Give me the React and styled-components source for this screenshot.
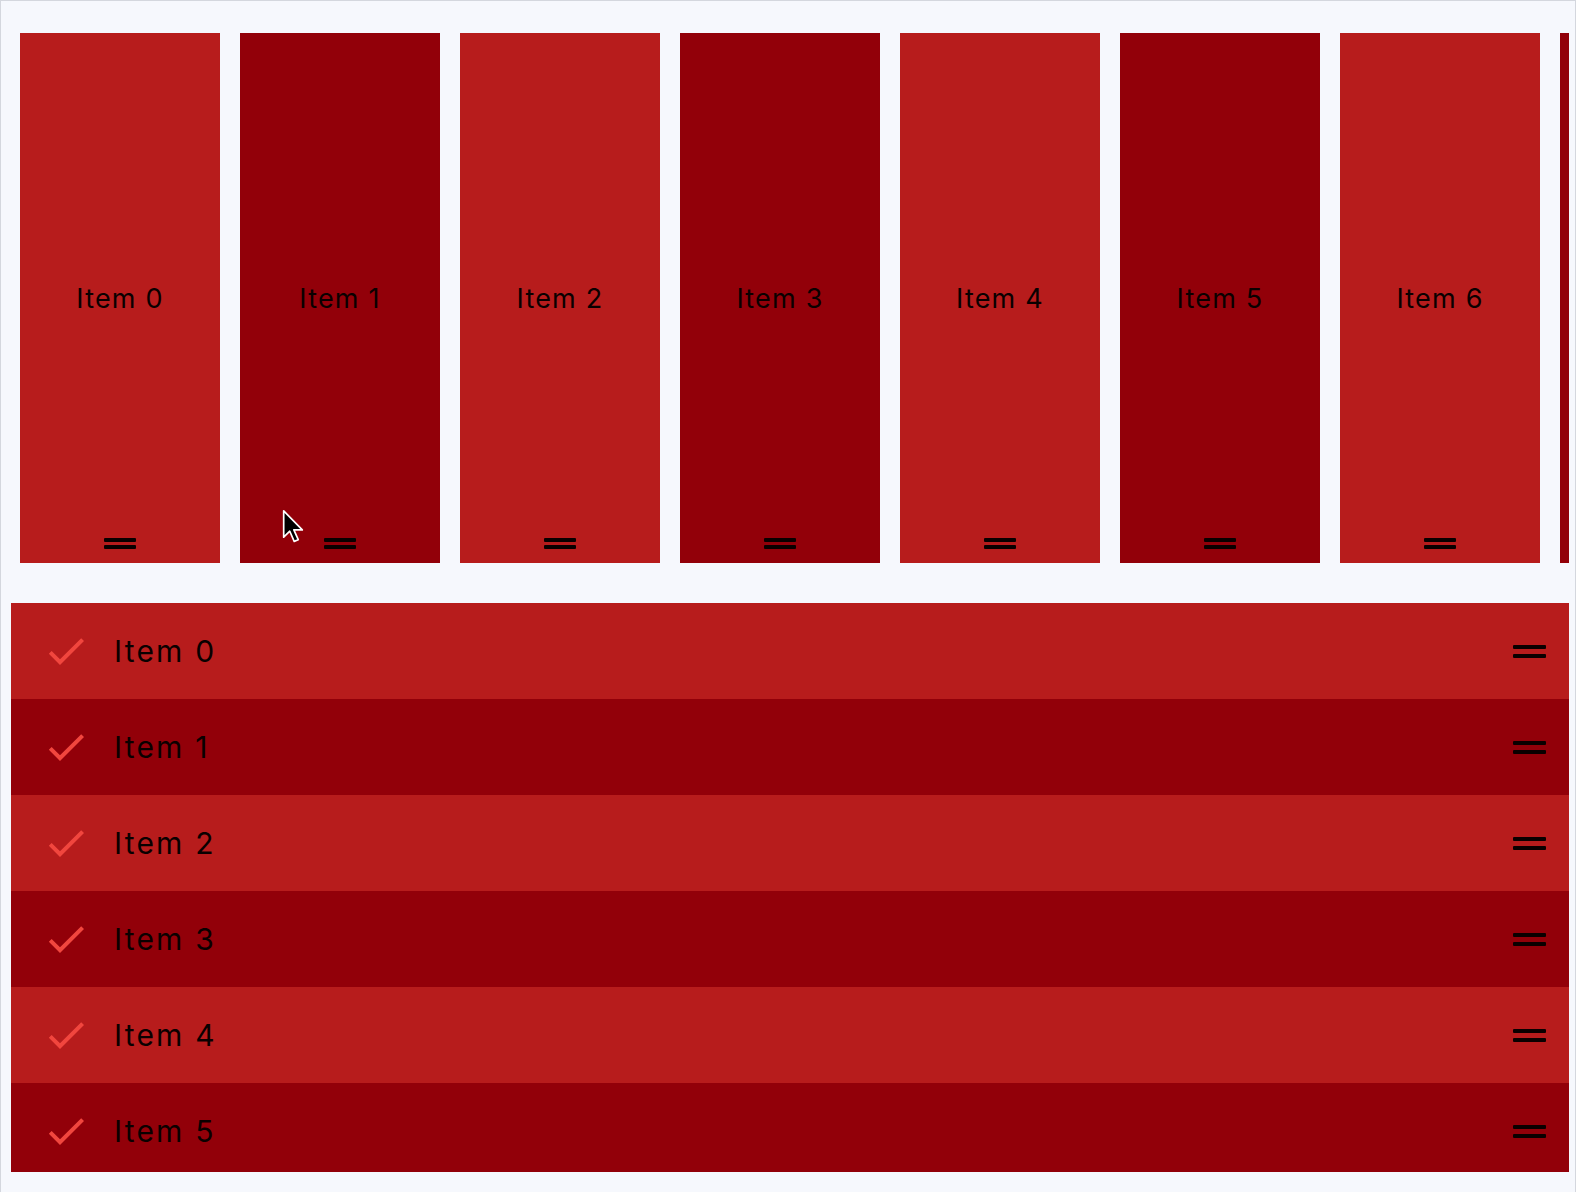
import React from 'react';
import styled, { createGlobalStyle } from 'styled-components';

const GlobalStyle = createGlobalStyle`
  html, body {
    margin: 0;
    padding: 0;
    background: #f6f8fd;
  }

  * {
    box-sizing: border-box;
  }
`;

const LIGHT = '#b71c1c';
const DARK = '#920009';

const Frame = styled.div`
  position: relative;
  width: 1576px;
  height: 1192px;
  border: 1px solid #d4d7de;
  border-bottom: none;
  background: #f6f8fd;
  padding: 0 6px 0 10px;
  overflow: hidden;
  font-family: Inter, Roboto, "Liberation Sans", sans-serif;
`;

const Strip = styled.div`
  display: flex;
  gap: 20px;
  padding: 32px 0 0 9px;
  margin-bottom: 40px;
  overflow: hidden;
`;

const Card = styled.div`
  flex: 0 0 200px;
  height: 530px;
  display: grid;
  grid-template-rows: 1fr auto 1fr;
  justify-items: center;
  background: ${p => p.$tone};
`;

const CardLabel = styled.div`
  grid-row: 2;
  font-size: 27px;
  letter-spacing: 1.2px;
  color: #0a0000;
`;

const Handle = styled.div`
  display: flex;
  flex: none;
  flex-direction: column;
  gap: ${p => p.$gap}px;
  width: ${p => p.$width}px;

  & span {
    display: block;
    height: ${p => p.$bar}px;
    background: #0a0000;
    border-radius: 1px;
  }
`;

const CardHandle = styled(Handle)`
  grid-row: 3;
  align-self: end;
  margin-bottom: 14px;
`;

const List = styled.div`
  height: 569px;
  overflow: hidden;
`;

const Row = styled.div`
  display: flex;
  align-items: center;
  height: 96px;
  padding: 0 23px 0 31px;
  background: ${p => p.$tone};
`;

const Check = styled.svg`
  width: 48px;
  height: 48px;
  flex: none;
  fill: #f1463e;
`;

const RowLabel = styled.div`
  flex: 1;
  margin-left: 24px;
  font-size: 30px;
  letter-spacing: 2.2px;
  color: #0a0000;
`;

const Cursor = styled.svg`
  position: absolute;
  left: 281px;
  top: 508px;
  width: 22px;
  height: 36px;
`;

const cards = [0, 1, 2, 3, 4, 5, 6, 7];
const rows = [0, 1, 2, 3, 4, 5];

export default function App() {
  return (
    <>
      <GlobalStyle />
      <Frame>
        <Strip>
          {cards.map(i => (
            <Card key={i} $tone={i % 2 ? DARK : LIGHT}>
              <CardLabel>Item {i}</CardLabel>
              <CardHandle $width={32} $bar={4} $gap={3}>
                <span />
                <span />
              </CardHandle>
            </Card>
          ))}
        </Strip>

        <List>
          {rows.map(i => (
            <Row key={i} $tone={i % 2 ? DARK : LIGHT}>
              <Check viewBox="0 0 24 24">
                <path d="M9 16.17L4.83 12l-1.42 1.41L9 19 21 7l-1.41-1.41z" />
              </Check>
              <RowLabel>Item {i}</RowLabel>
              <Handle $width={33} $bar={4} $gap={5}>
                <span />
                <span />
              </Handle>
            </Row>
          ))}
        </List>

        <Cursor viewBox="0 0 13 21">
          <path
            d="M1 1 L1 16.5 L4.6 13 L7.2 19 L9.6 18 L7 12.2 L12 12.2 Z"
            fill="#000"
            stroke="#fff"
            strokeWidth="1"
            strokeLinejoin="round"
          />
        </Cursor>
      </Frame>
    </>
  );
}
